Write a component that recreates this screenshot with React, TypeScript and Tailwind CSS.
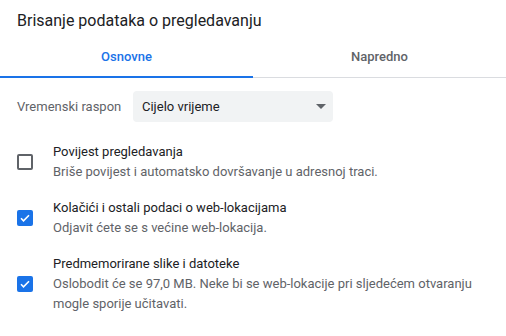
import { useState } from "react";

type Item = { title: string; desc: string; checked: boolean };

const initialItems: Item[] = [
  {
    title: "Povijest pregledavanja",
    desc: "Briše povijest i automatsko dovršavanje u adresnoj traci.",
    checked: false,
  },
  {
    title: "Kolačići i ostali podaci o web-lokacijama",
    desc: "Odjavit ćete se s većine web-lokacija.",
    checked: true,
  },
  {
    title: "Predmemorirane slike i datoteke",
    desc: "Oslobodit će se 97,0 MB. Neke bi se web-lokacije pri sljedećem otvaranju mogle sporije učitavati.",
    checked: true,
  },
];

function Checkbox({ checked, onClick }: { checked: boolean; onClick: () => void }) {
  if (checked)
    return (
      <button
        onClick={onClick}
        className="w-4 h-4 shrink-0 rounded-[2px] bg-[#1a73e8] flex items-center justify-center"
      >
        <svg width="12" height="12" viewBox="0 0 24 24">
          <path d="M4 12.5l5 5L20 6.5" fill="none" stroke="#fff" strokeWidth="3.2" />
        </svg>
      </button>
    );
  return (
    <button
      onClick={onClick}
      className="w-4 h-4 shrink-0 rounded-[2px] border-2 border-[#5f6368] bg-white"
    />
  );
}

export default function App() {
  const [tab, setTab] = useState(0);
  const [items, setItems] = useState(initialItems);

  const toggle = (i: number) => {
    setItems(items.map((it, idx) => (idx == i ? { ...it, checked: !it.checked } : it)));
  };

  return (
    <div className="w-[506px] h-[336px] bg-white overflow-hidden font-['Roboto',sans-serif]">
      <h1 className="pt-[9px] px-[17px] text-base leading-6 text-[#202124]">
        Brisanje podataka o pregledavanju
      </h1>

      <div className="mt-1 flex border-b border-[#dadce0]">
        {["Osnovne", "Napredno"].map((t, i) => (
          <button
            key={t}
            onClick={() => setTab(i)}
            className={
              "flex-1 h-[41px] -mb-px text-[13px] font-medium border-b-2 " +
              (tab == i
                ? "text-[#1a73e8] border-[#1a73e8]"
                : "text-[#5f6368] border-transparent")
            }
          >
            {t}
          </button>
        ))}
      </div>

      <div className="mt-[13px] px-[17px] flex items-center">
        <span className="text-[13px] text-[#5f6368] w-[116px] whitespace-nowrap">
          Vremenski raspon
        </span>
        <div className="w-[200px] h-[31px] rounded bg-[#f1f3f4] flex items-center justify-between pl-[9px] pr-[7px]">
          <span className="text-[13px] text-[#202124]">Cijelo vrijeme</span>
          <svg width="10" height="5" viewBox="0 0 10 5">
            <path d="M0 0h10L5 5z" fill="#5f6368" />
          </svg>
        </div>
      </div>

      <div className="mt-5 flex flex-col gap-4">
        {items.map((it, i) => (
          <div key={i} className="flex items-center pl-[17px] pr-4">
            <Checkbox checked={it.checked} onClick={() => toggle(i)} />
            <div className="ml-5 text-[13px] leading-5">
              <div className="text-[#202124]">{it.title}</div>
              <div className="text-[#5f6368]">{it.desc}</div>
            </div>
          </div>
        ))}
      </div>
    </div>
  );
}
